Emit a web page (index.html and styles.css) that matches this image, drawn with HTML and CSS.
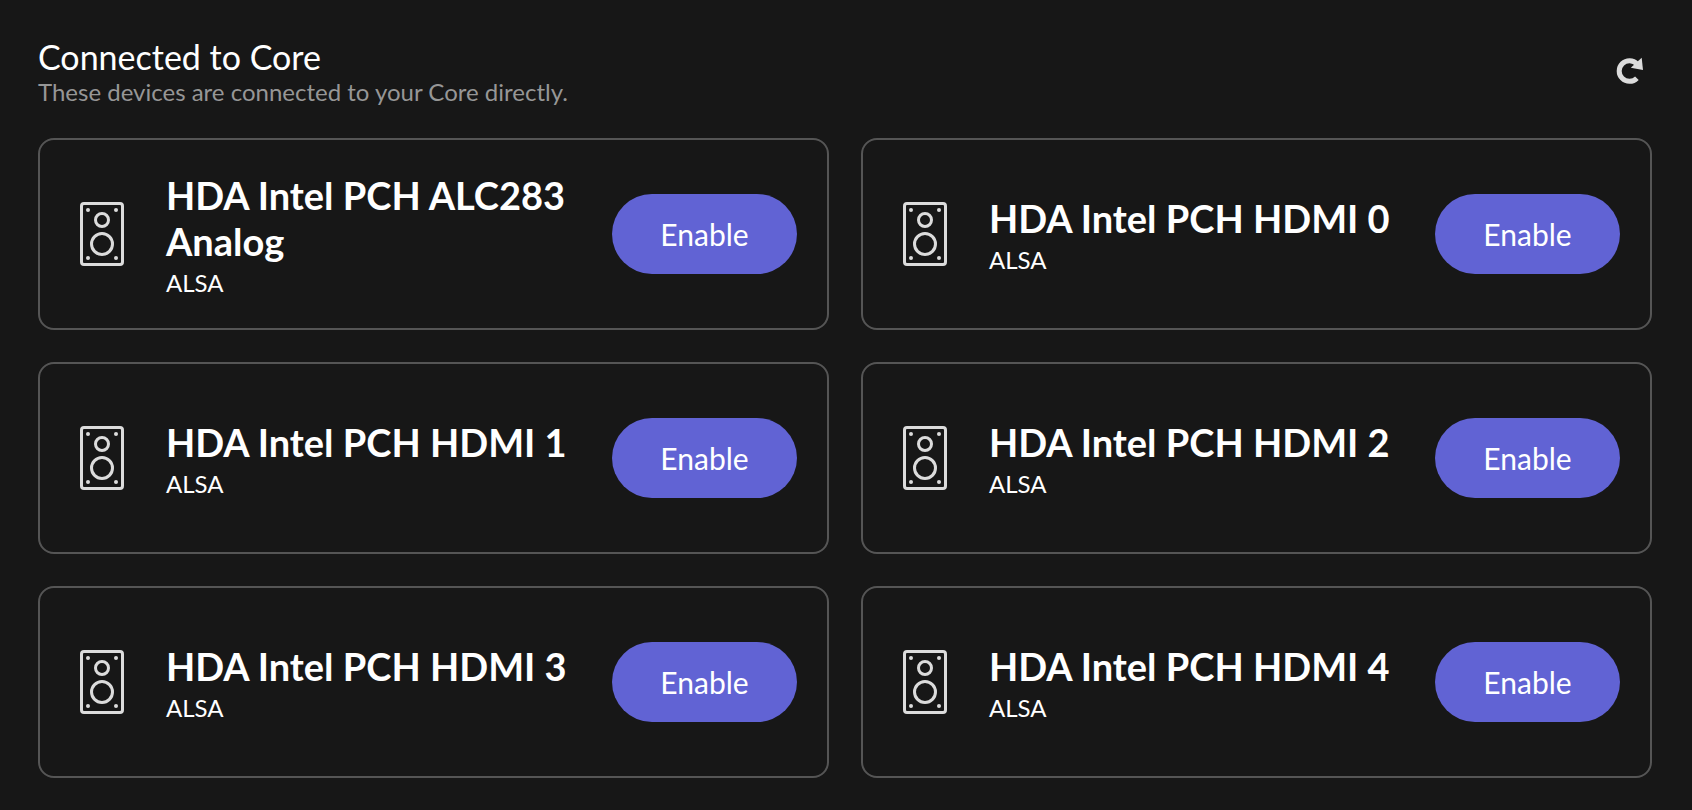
FILE: index.html
```html
<!DOCTYPE html>
<html lang="en">
<head>
    <meta charset="UTF-8">
    <meta name="viewport" content="width=device-width, initial-scale=1.0">
    <title>Audio Devices</title>
    <link rel="stylesheet" href="styles.css">
</head>
<body>

    <!-- Speaker icon shared by all the device cards -->
    <svg class="icon-defs" aria-hidden="true">
        <symbol id="speaker" viewBox="0 0 44 64">
            <rect x="1.5" y="1.5" width="41" height="61" rx="2.5" fill="none" stroke="currentColor" stroke-width="3"/>
            <circle cx="22" cy="18" r="6.5" fill="none" stroke="currentColor" stroke-width="3"/>
            <circle cx="22" cy="42" r="10.5" fill="none" stroke="currentColor" stroke-width="3"/>
            <circle cx="8" cy="8" r="2" fill="currentColor"/>
            <circle cx="36" cy="8" r="2" fill="currentColor"/>
            <circle cx="8" cy="56" r="2" fill="currentColor"/>
            <circle cx="36" cy="56" r="2" fill="currentColor"/>
        </symbol>
    </svg>

    <!-- Header Section -->
    <header class="header">
        <div>
            <h1>Connected to Core</h1>
            <p class="subtitle">These devices are connected to your Core directly.</p>
        </div>
        <button class="refresh" type="button" aria-label="Refresh">
            <svg width="28" height="28" viewBox="0 0 28 28">
                <path d="M20.9 21.2 A10.3 10.3 0 1 1 21 7" fill="none" stroke="currentColor" stroke-width="5"/>
                <path d="M25.7 0.8 L27 13 L14.8 10.8 Z" fill="currentColor"/>
            </svg>
        </button>
    </header>

    <!-- Device Cards -->
    <main class="devices">
        <section class="card">
            <svg class="speaker"><use href="#speaker"/></svg>
            <div class="info">
                <h2>HDA Intel PCH ALC283 Analog</h2>
                <p>ALSA</p>
            </div>
            <button class="enable" type="button">Enable</button>
        </section>

        <section class="card">
            <svg class="speaker"><use href="#speaker"/></svg>
            <div class="info">
                <h2>HDA Intel PCH HDMI 0</h2>
                <p>ALSA</p>
            </div>
            <button class="enable" type="button">Enable</button>
        </section>

        <section class="card">
            <svg class="speaker"><use href="#speaker"/></svg>
            <div class="info">
                <h2>HDA Intel PCH HDMI 1</h2>
                <p>ALSA</p>
            </div>
            <button class="enable" type="button">Enable</button>
        </section>

        <section class="card">
            <svg class="speaker"><use href="#speaker"/></svg>
            <div class="info">
                <h2>HDA Intel PCH HDMI 2</h2>
                <p>ALSA</p>
            </div>
            <button class="enable" type="button">Enable</button>
        </section>

        <section class="card">
            <svg class="speaker"><use href="#speaker"/></svg>
            <div class="info">
                <h2>HDA Intel PCH HDMI 3</h2>
                <p>ALSA</p>
            </div>
            <button class="enable" type="button">Enable</button>
        </section>

        <section class="card">
            <svg class="speaker"><use href="#speaker"/></svg>
            <div class="info">
                <h2>HDA Intel PCH HDMI 4</h2>
                <p>ALSA</p>
            </div>
            <button class="enable" type="button">Enable</button>
        </section>
    </main>

</body>
</html>
```
FILE: styles.css
```css
/* General page styling */
* {
    box-sizing: border-box;
}

body {
    font-family: Lato, sans-serif;
    margin: 0;
    padding: 36px 40px 32px 38px;
    background-color: #171717;
    color: #fff;
}

h1, h2, p {
    margin: 0;
}

.icon-defs {
    display: none;
}

/* Header styling */
.header {
    display: flex;
    justify-content: space-between;
    align-items: center;
    margin-bottom: 32px;
}

h1 {
    font-size: 34px;
    line-height: 41px;
    font-weight: 400;
}

.subtitle {
    font-size: 24px;
    line-height: 29px;
    color: #969696;
}

.refresh {
    display: flex;
    padding: 8px;
    border: none;
    background: none;
    color: #dcdcdc;
    cursor: pointer;
}

/* Grid of device cards, all rows as tall as the tallest one */
.devices {
    display: grid;
    grid-template-columns: repeat(2, minmax(0, 1fr));
    grid-auto-rows: 1fr;
    gap: 32px;
}

.card {
    display: flex;
    align-items: center;
    min-height: 192px;
    padding: 24px 30px;
    border: 2px solid #555;
    border-radius: 16px;
}

.speaker {
    flex: none;
    width: 44px;
    height: 64px;
    margin: 0 10px;
    color: #dcdcdc;
}

.info {
    flex: 1;
    margin: 0 32px;
}

.info h2 {
    font-size: 38px;
    line-height: 46px;
    font-weight: 700;
}

.info p {
    margin-top: 4px;
    font-size: 24px;
    line-height: 29px;
}

/* Button styling */
.enable {
    flex: none;
    min-width: 185px;
    height: 80px;
    padding: 0 48px;
    border: none;
    border-radius: 40px;
    background-color: #6163d4;
    color: #fff;
    font-family: inherit;
    font-size: 30px;
    cursor: pointer;
}

.enable:hover {
    background-color: #7274dd;
}
```
